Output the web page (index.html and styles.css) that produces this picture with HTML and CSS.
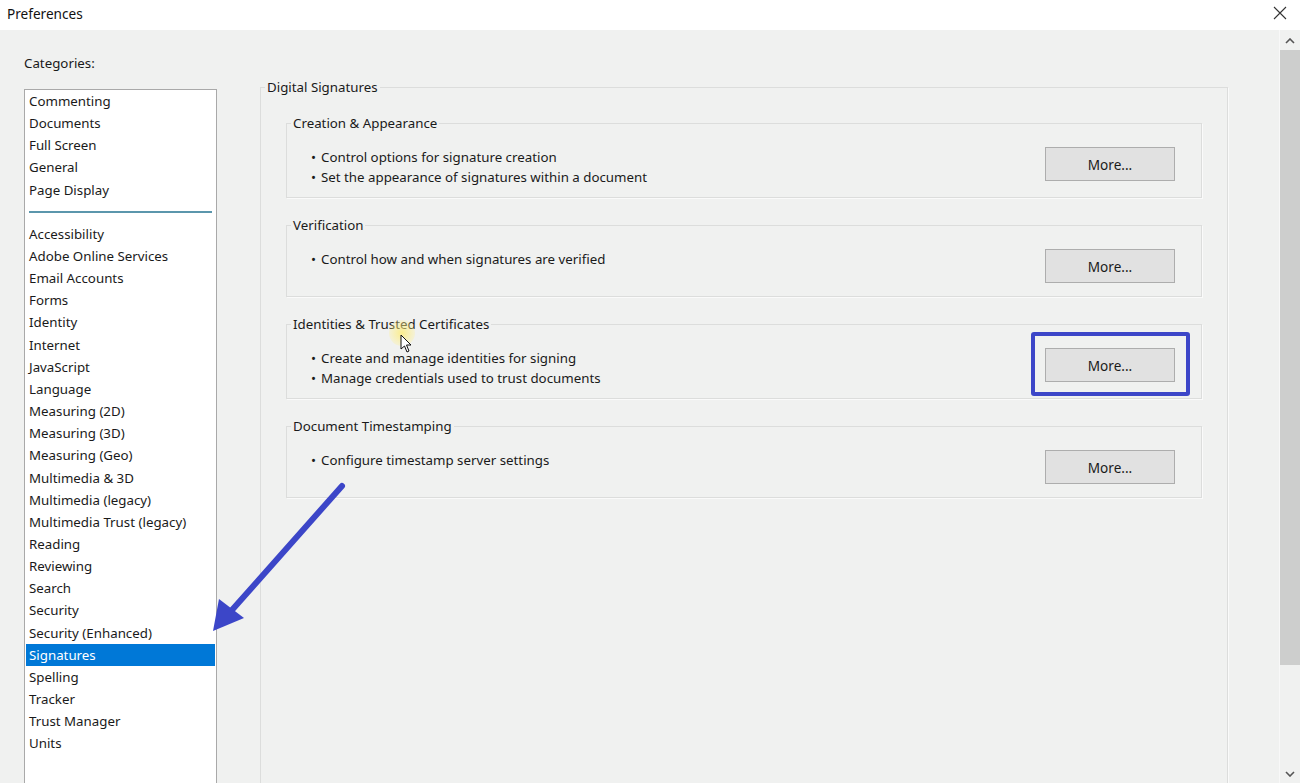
FILE: index.html
```html
<!DOCTYPE html>
<html lang="en">
  <head>
    <meta charset="utf-8" />
    <title>Preferences</title>
    <link rel="stylesheet" href="styles.css">
  </head>

  <body>
    <div class="titlebar">
      <span class="title">Preferences</span>
      <svg class="close" width="14" height="14" viewBox="0 0 14 14">
        <path d="M1 1 L13 13 M13 1 L1 13" stroke="#333" stroke-width="1.1" fill="none" />
      </svg>
    </div>

    <div class="main">
      <div class="sidebar">
        <div class="sidebar-label">Categories:</div>
        <ul class="listbox">
          <li>Commenting</li>
          <li>Documents</li>
          <li>Full Screen</li>
          <li>General</li>
          <li>Page Display</li>
          <li class="separator"></li>
          <li>Accessibility</li>
          <li>Adobe Online Services</li>
          <li>Email Accounts</li>
          <li>Forms</li>
          <li>Identity</li>
          <li>Internet</li>
          <li>JavaScript</li>
          <li>Language</li>
          <li>Measuring (2D)</li>
          <li>Measuring (3D)</li>
          <li>Measuring (Geo)</li>
          <li>Multimedia &amp; 3D</li>
          <li>Multimedia (legacy)</li>
          <li>Multimedia Trust (legacy)</li>
          <li>Reading</li>
          <li>Reviewing</li>
          <li>Search</li>
          <li>Security</li>
          <li>Security (Enhanced)</li>
          <li class="selected">Signatures</li>
          <li>Spelling</li>
          <li>Tracker</li>
          <li>Trust Manager</li>
          <li>Units</li>
        </ul>
      </div>

      <div class="content">
        <fieldset class="group outer">
          <legend>Digital Signatures</legend>
          <div class="outer-body">

            <fieldset class="group">
              <legend>Creation &amp; Appearance</legend>
              <div class="group-row">
                <ul class="bullets">
                  <li>Control options for signature creation</li>
                  <li>Set the appearance of signatures within a document</li>
                </ul>
                <button class="more">More...</button>
              </div>
            </fieldset>

            <fieldset class="group">
              <legend>Verification</legend>
              <div class="group-row">
                <ul class="bullets">
                  <li>Control how and when signatures are verified</li>
                </ul>
                <button class="more">More...</button>
              </div>
            </fieldset>

            <fieldset class="group">
              <legend>Identities &amp; Trusted Certificates</legend>
              <div class="group-row">
                <ul class="bullets">
                  <li>Create and manage identities for signing</li>
                  <li>Manage credentials used to trust documents</li>
                </ul>
                <span class="marked">
                  <button class="more">More...</button>
                </span>
              </div>
            </fieldset>

            <fieldset class="group">
              <legend>Document Timestamping</legend>
              <div class="group-row">
                <ul class="bullets">
                  <li>Configure timestamp server settings</li>
                </ul>
                <button class="more">More...</button>
              </div>
            </fieldset>

          </div>
        </fieldset>
      </div>

      <div class="scrollbar">
        <svg class="scroll-arrow" width="10" height="6" viewBox="0 0 10 6">
          <path d="M1 5 L5 1 L9 5" stroke="#555" stroke-width="1.6" fill="none" />
        </svg>
        <div class="scroll-thumb"></div>
        <div class="scroll-track"></div>
        <svg class="scroll-arrow" width="10" height="6" viewBox="0 0 10 6">
          <path d="M1 1 L5 5 L9 1" stroke="#555" stroke-width="1.6" fill="none" />
        </svg>
      </div>
    </div>

    <!-- annotation arrow pointing at the Signatures entry -->
    <svg class="pointer-arrow" width="1300" height="783" viewBox="0 0 1300 783">
      <line x1="342" y1="486" x2="232" y2="610" stroke="#3c46c8" stroke-width="6" stroke-linecap="round" />
      <polygon points="213,631 219,599 244,618" fill="#3c46c8" />
    </svg>

    <!-- mouse cursor with its click halo -->
    <div class="cursor-halo"></div>
    <svg class="cursor" width="14" height="20" viewBox="0 0 14 20">
      <path d="M1 1 L1 15 L4.5 12 L7 18 L9 17 L6.5 11 L11 11 Z" fill="#fff" stroke="#111" stroke-width="1" />
    </svg>
  </body>
</html>
```

FILE: styles.css
```css
body {
  margin: 0;
  width: 1300px;
  height: 783px;
  overflow: hidden;
  background-color: #f0f1f0;
  color: #1a1a1a;
  font-family: 'Noto Sans', 'Open Sans', sans-serif;
  font-size: 13.3px;
  position: relative;
}

ul {
  list-style: none;
  margin: 0;
  padding: 0;
}

/* window title */
.titlebar {
  height: 30px;
  background-color: #fff;
  display: flex;
  align-items: center;
  justify-content: space-between;
  padding: 0 13px 4px 7px;
  box-sizing: border-box;
}

.title {
  font-size: 13.6px;
  color: #111;
}

.main {
  display: flex;
  height: 753px;
  overflow: hidden;
}

/* categories list */
.sidebar {
  width: 260px;
  padding-left: 24px;
  box-sizing: border-box;
  flex-shrink: 0;
}

.sidebar-label {
  margin-top: 23px;
  line-height: 20px;
}

.listbox {
  margin-top: 16px;
  width: 193px;
  height: 720px;
  box-sizing: border-box;
  background-color: #fff;
  border: 1px solid #a9a9a9;
  padding: 0 1px;
}

.listbox li {
  line-height: 22.15px;
  padding-left: 3px;
  white-space: nowrap;
}

.listbox li.separator {
  height: 2px;
  margin: 10px 3px 10px 3px;
  background-color: #5b96ac;
}

.listbox li.selected {
  background-color: #0078d7;
  color: #fff;
}

/* group boxes */
.content {
  flex: 1;
  padding-top: 47px;
}

.group {
  margin: 0;
  padding: 0;
  border: 1px solid #dcdddc;
  box-shadow: 1px 1px 0 #fafafa;
  min-width: 0;
}

.group legend {
  margin-left: 4px;
  padding: 0 2px;
  line-height: 20px;
}

.outer {
  width: 968px;
  height: 760px;
  box-sizing: border-box;
}

.outer-body {
  padding: 16px 25px 0 25px;
  display: flex;
  flex-direction: column;
  gap: 17px;
}

.group-row {
  display: flex;
  justify-content: space-between;
  align-items: flex-start;
  padding: 14px 26px 10px 24px;
}

.bullets li {
  line-height: 20px;
}

.bullets li::before {
  content: "\2022";
  margin-right: 5px;
}

.more {
  width: 130px;
  height: 34px;
  margin: 0 0 3px;
  background-color: #e1e1e1;
  border: 1px solid #adadad;
  border-radius: 0;
  font-family: inherit;
  font-size: 13.6px;
  color: #1a1a1a;
  padding: 0;
}

.marked {
  position: relative;
  display: inline-flex;
}

.marked .more {
  margin-bottom: 0;
}

.marked::after {
  content: "";
  position: absolute;
  top: -16px;
  bottom: -14px;
  left: -14px;
  right: -15px;
  border: 4px solid #3c46c8;
  border-radius: 3px;
}

/* scrollbar */
.scrollbar {
  width: 20px;
  margin-left: auto;
  display: flex;
  flex-direction: column;
  align-items: center;
  background-color: #f0f1f0;
  border-left: 1px solid #f8f8f8;
}

.scroll-arrow {
  margin: 8px 0 6px;
  flex-shrink: 0;
}

.scroll-thumb {
  width: 20px;
  height: 615px;
  background-color: #cdcecd;
  flex-shrink: 0;
}

.scroll-track {
  flex: 1;
}

/* annotations drawn over the dialog */
.pointer-arrow {
  position: absolute;
  left: 0;
  top: 0;
  pointer-events: none;
}

.cursor-halo {
  position: absolute;
  left: 389px;
  top: 320px;
  width: 26px;
  height: 26px;
  border-radius: 50%;
  background: radial-gradient(circle, rgba(255, 236, 110, 0.75) 0%, rgba(255, 240, 140, 0.35) 60%, rgba(255, 240, 140, 0) 100%);
}

.cursor {
  position: absolute;
  left: 400px;
  top: 334px;
}
```
